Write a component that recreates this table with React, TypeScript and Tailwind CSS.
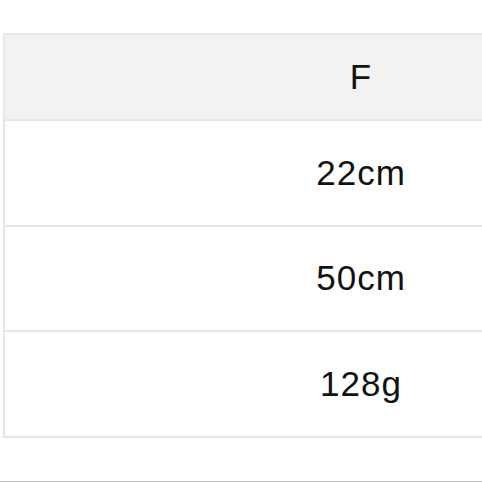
const rows = [
  { label: "F", header: true, h: "h-[86px]" },
  { label: "22cm", header: false, h: "h-[106px]" },
  { label: "50cm", header: false, h: "h-[105px]" },
  { label: "128g", header: false, h: "h-[106px]" },
];

export default function App() {
  return (
    <div
      className="w-[482px] h-[482px] bg-white overflow-hidden flex flex-col"
      style={{ fontFamily: '"Liberation Sans", Arial, sans-serif' }}
    >
      <div className="pt-[33px] pl-[3px]">
        {/* size table, cut at the right edge */}
        <div className="border-l-2 border-b-2 border-[#e6e6e6]">
          {rows.map((r) => (
            <div
              key={r.label}
              className={`${r.h} border-t-2 border-[#e6e6e6] flex ${
                r.header ? "bg-[#f2f2f2]" : "bg-white"
              }`}
            >
              <div className="w-[235px]" />
              <div className="flex-1 flex items-center justify-center text-[35px] text-[#111] tracking-[1px]">
                {r.label}
              </div>
            </div>
          ))}
        </div>
      </div>
      <div className="flex-1" />
      <div className="h-[1px] bg-[#c4c4c4]" />
    </div>
  );
}
